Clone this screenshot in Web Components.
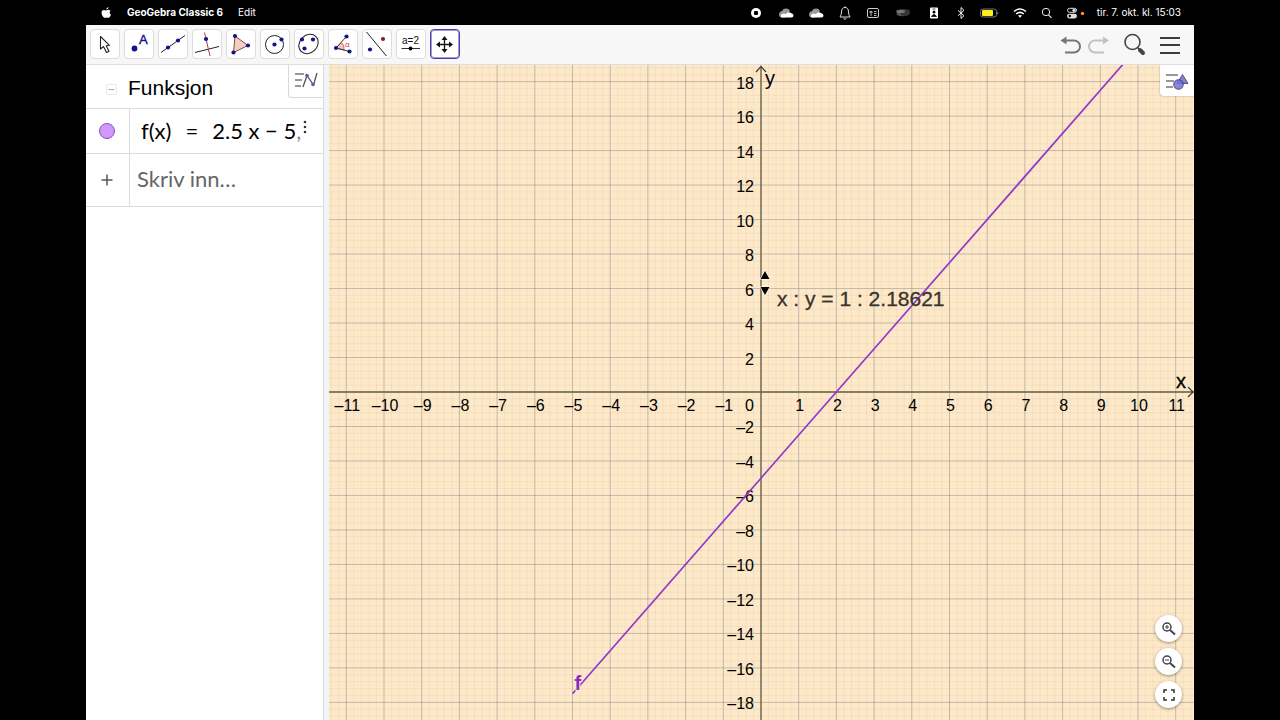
<!DOCTYPE html>
<html lang="no">
<head>
<meta charset="utf-8">
<title>GeoGebra Classic 6</title>
<style>
  html, body {
    margin: 0;
    height: 100%;
    background: #000;
  }

  body {
    font-family: "Liberation Sans", Arial, sans-serif;
    color: #000;
    overflow: hidden;
  }

  .cut { color: #888; }
</style>
</head>
<body>

<geo-app>
  <system-bar slot="system"></system-bar>
  <geo-toolbar slot="toolbar">
    <tool-button icon="move" label="Flytt"></tool-button>
    <tool-button icon="point" label="Punkt"></tool-button>
    <tool-button icon="line" label="Linje"></tool-button>
    <tool-button icon="perpendicular" label="Normal"></tool-button>
    <tool-button icon="polygon" label="Mangekant"></tool-button>
    <tool-button icon="circle" label="Sirkel"></tool-button>
    <tool-button icon="ellipse" label="Ellipse"></tool-button>
    <tool-button icon="angle" label="Vinkel"></tool-button>
    <tool-button icon="reflect" label="Speiling"></tool-button>
    <tool-button icon="slider" label="Glider"></tool-button>
    <tool-button icon="pan" label="Flytt grafikkfeltet" selected></tool-button>
  </geo-toolbar>
  <algebra-view slot="algebra" heading="Funksjon">
    <algebra-row>
      <button slot="marker" class="dot" aria-label="Vis eller skjul f"></button>
      <span>f(x)</span>
      <span>=</span>
      <span>2.5 x &minus; 5<span class="cut">,</span></span>
    </algebra-row>
    <algebra-row input placeholder="Skriv inn…"></algebra-row>
  </algebra-view>
  <graph-view slot="graph" slope="2.5" intercept="-5" from="-5"></graph-view>
</geo-app>

<script>
  const NAVY = '#14148a';

  // Toolbar icons, drawn on a 30x30 grid
  const TOOL_ICONS = {
    move: `<path d="M10.5 7.5 L10.5 20 L13.5 17.5 L16.5 23.5 L19 22.3 L16.2 16.8 L19.5 16.3 Z" fill="#fff" stroke="#222" stroke-width="1.1" stroke-linejoin="round"/>`,
    point: `<circle cx="10.5" cy="19.5" r="2.9" fill="${NAVY}"/>
      <text x="15" y="15" font-size="13" fill="${NAVY}" stroke="${NAVY}" stroke-width=".4">A</text>`,
    line: `<path d="M3 23.5 L27 6.5" stroke="#222" stroke-width="1"/>
      <circle cx="10" cy="18.5" r="2.1" fill="${NAVY}"/><circle cx="20" cy="11.5" r="2.1" fill="${NAVY}"/>`,
    perpendicular: `<path d="M3 23.5 L27 17.5" stroke="#222" stroke-width="1"/>
      <path d="M12.5 3.5 L18 27" stroke="#b03a44" stroke-width="1"/>
      <circle cx="14" cy="10" r="2.1" fill="${NAVY}"/>`,
    polygon: `<path d="M9 7 L22 16.5 L7.5 23.5 Z" fill="#f0cfc4" stroke="#8a4a3a" stroke-width="1"/>
      <circle cx="9" cy="7" r="2.1" fill="${NAVY}"/><circle cx="22" cy="16.5" r="2.1" fill="${NAVY}"/><circle cx="7.5" cy="23.5" r="2.1" fill="${NAVY}"/>`,
    circle: `<circle cx="14.5" cy="15.5" r="9" fill="none" stroke="#222"/>
      <circle cx="14.5" cy="15.5" r="2.1" fill="${NAVY}"/><circle cx="21.5" cy="10.5" r="2.1" fill="${NAVY}"/>`,
    ellipse: `<ellipse cx="14.5" cy="15" rx="10.5" ry="8.8" transform="rotate(-45 14.5 15)" fill="none" stroke="#222"/>
      <circle cx="8" cy="10.5" r="2.1" fill="${NAVY}"/><circle cx="19" cy="10.5" r="2.1" fill="${NAVY}"/><circle cx="10.5" cy="19.5" r="2.1" fill="${NAVY}"/>`,
    angle: `<path d="M8 19 L13.5 13.5 A8 8 0 0 1 16 21 Z" fill="#f7c4c4" stroke="#d05a60" stroke-width=".9"/>
      <path d="M18.5 7.5 L8 19 L21.5 22.5" fill="none" stroke="#333"/>
      <text x="17" y="18" font-size="8" fill="#c33a40">α</text>
      <circle cx="18.5" cy="7.5" r="2.1" fill="${NAVY}"/><circle cx="8" cy="19" r="2.1" fill="${NAVY}"/><circle cx="21.5" cy="22.5" r="2.1" fill="${NAVY}"/>`,
    reflect: `<path d="M4.5 3 L24.5 27" stroke="#222" stroke-width="1"/>
      <circle cx="8" cy="20.5" r="2.1" fill="${NAVY}"/><circle cx="21" cy="10" r="2.1" fill="#8c1a22"/>`,
    slider: `<text x="14.5" y="15" font-size="10" text-anchor="middle" fill="#111">a=2</text>
      <path d="M5.5 19.5 H24" stroke="#333" stroke-width="1"/><circle cx="14.5" cy="19.5" r="1.9" fill="#000"/>`,
    pan: `<path d="M14.5 9.5 V21.5 M8.5 15.5 H20.5" stroke="#111" stroke-width="1.3"/>
      <path d="M14.5 7 l3 4 h-6z M14.5 24 l3 -4 h-6z M6 15.5 l4 -3 v6z M23 15.5 l-4 -3 v6z" fill="#111"/>`
  };

  const CLOUD = `<path d="M2 10 a4 4 0 0 1 3 -4 a4.5 4.5 0 0 1 8 0 L8 12.5 H4 A3 3 0 0 1 2 10z" fill="#999"/><path d="M4.5 12.5 a2.5 2.5 0 0 1 .5 -3.5 q2 -1 4 0 q2 -3 5 -1 q2.5 .5 2.5 2.5 q0 2 -2 2z" fill="#fff"/>`;

  // Menu bar icons: [width, markup], each 16 high
  const STATUS_ICONS = [
    [18, `<circle cx="9" cy="8" r="5" fill="#fff"/><rect x="7" y="6" width="4" height="4" rx="1" fill="#000"/>`],
    [18, CLOUD],
    [18, CLOUD],
    [16, `<path d="M3 12 Q4.5 10 4.5 7 Q4.5 2.5 8 2.5 Q11.5 2.5 11.5 7 Q11.5 10 13 12z M6.5 13.5 q1.5 1.5 3 0 M8 1.3 V2.5" fill="none" stroke="#ddd"/>`],
    [16, `<rect x="2.5" y="3.5" width="11" height="9" rx="1.5" fill="none" stroke="#ccc"/><path d="M5 6.5 h2 v1.5 h-2z M5 10 h2 M9 6.5 h2.5 M9 8.5 h2.5 M9 10.5 h2.5" fill="none" stroke="#ccc" stroke-width=".9"/>`],
    [20, `<path d="M3 5.5 Q10 3 16.5 5.5 V9 Q10 13 4 10z" fill="#555"/><ellipse cx="12" cy="8" rx="4.5" ry="3" fill="#333"/><ellipse cx="8" cy="6.5" rx="4" ry="1.5" fill="#777"/>`],
    [18, `<rect x="5" y="2.5" width="8" height="11" rx="1" fill="#fff"/><circle cx="9" cy="7" r="1.5"/><path d="M6.5 11.5 q2.5 -4 5 0z M7.5 4 h3" stroke="#000" stroke-width=".7"/>`],
    [12, `<path d="M3 5.3 L9 10.7 L6 13.5 V2.5 L9 5.3 L3 10.7" fill="none" stroke="#eee"/>`],
    [20, `<rect x="1.5" y="4" width="16" height="8" rx="2.5" fill="none" stroke="#777"/><rect x="3" y="5" width="11" height="6" rx="1" fill="#ffee1e"/><path d="M18.8 6.8 v2.5" stroke="#777"/>`],
    [18, `<path d="M3 6.5 Q9 1.5 15 6.5 M5.2 9 Q9 5.8 12.8 9" fill="none" stroke="#fff" stroke-width="1.5"/><path d="M7 10.6 Q9 9.2 11 10.6 L9 12.8z" fill="#fff"/>`],
    [12, `<circle cx="5" cy="7" r="3.7" fill="none" stroke="#eee"/><path d="M7.5 9.8 L10.5 12.8" stroke="#eee" stroke-width="1.2"/>`],
    [20, `<rect x="2.5" y="3.3" width="9" height="4" rx="2" fill="none" stroke="#ddd"/><rect x="2" y="8.7" width="10" height="4.8" rx="2.4" fill="#ddd"/><circle cx="9" cy="5.3" r="1.6" fill="#ddd"/><circle cx="4.8" cy="11" r="1.2"/><circle cx="17.5" cy="8.5" r="1.7" fill="#ff8c2a"/>`]
  ];

  const svg = (w, h, body) =>
    `<svg width="${w}" height="${h}" viewBox="0 0 ${w} ${h}" fill="#000" aria-hidden="true">${body}</svg>`;

  class BaseElement extends HTMLElement {
    constructor() {
      super();
      this.attachShadow({ mode: 'open' });
    }

    connectedCallback() {
      this.render();
    }
  }

  /* Window frame: system bar, toolbar, and the two views side by side */
  class GeoApp extends BaseElement {
    render() {
      this.shadowRoot.innerHTML = `
        <style>
          :host {
            display: grid;
            grid-template-rows: auto auto minmax(0, 1fr);
            height: 100vh;
            box-sizing: border-box;
            padding: 0 86px;
          }

          main {
            display: grid;
            grid-template-columns: 237px 6px minmax(0, 1fr);
            min-height: 0;
            background: #fff;
          }

          .splitter {
            background: #f3f4f7;
            box-shadow: inset 1px 0 #dcdce0;
          }
        </style>
        <slot name="system"></slot>
        <slot name="toolbar"></slot>
        <main>
          <slot name="algebra"></slot>
          <div class="splitter"></div>
          <slot name="graph"></slot>
        </main>
      `;
    }
  }

  class SystemBar extends BaseElement {
    render() {
      this.shadowRoot.innerHTML = `
        <style>
          :host {
            display: flex;
            align-items: center;
            justify-content: space-between;
            height: 25px;
            padding: 0 13px 0 14px;
            background: #000;
            color: #fff;
            font: 10px/25px Inter, "Liberation Sans", sans-serif;
          }

          nav, .status {
            display: flex;
            align-items: center;
          }

          button {
            padding: 0;
            border: 0;
            background: none;
            color: inherit;
            font: inherit;
          }

          nav { gap: 15px; }
          .app { font-weight: 700; }
          .status { gap: 12px; }
          svg { display: block; }
        </style>
        <nav>
          ${svg(12, 16, `<path d="M8.5 2 Q8.5 4.2 6.2 4.5 Q6.2 2.5 8.5 2z M6.2 5.5 Q8.5 4 10.5 5.8 Q8.5 7.5 11 9.8 Q9.8 13 8.3 13 Q6.5 12.2 5 13 Q3.3 13 2 10 Q.5 5.5 3.8 4.9 Q5 4.9 6.2 5.5z" fill="#fff"/>`)}
          <button class="app">GeoGebra Classic 6</button>
          <button>Edit</button>
        </nav>
        <div class="status">
          ${STATUS_ICONS.map(([w, body]) => svg(w, 16, body)).join('')}
          <time>tir. 7. okt. kl. 15:03</time>
        </div>
      `;
    }
  }

  class GeoToolbar extends BaseElement {
    render() {
      this.shadowRoot.innerHTML = `
        <style>
          :host {
            display: flex;
            align-items: center;
            justify-content: space-between;
            height: 38px;
            padding: 0 12px 1px 4px;
            background: #f7f7f8;
            border-bottom: 1px solid #dedede;
          }

          .tools { display: flex; gap: 4px; }
          .actions { display: flex; align-items: center; }

          button {
            display: flex;
            padding: 0;
            border: 0;
            background: none;
          }

          .search { margin: 0 11px; }
        </style>
        <div class="tools"><slot></slot></div>
        <div class="actions">
          <button aria-label="Angre">${svg(28, 28, `<path d="M9 10.5 H18 a5.8 5.8 0 0 1 0 12 H9" fill="none" stroke="#777" stroke-width="2"/><path d="M4.5 10.5 L10.5 6.5 V14.5z" fill="#777"/>`)}</button>
          <button aria-label="Gjør om">${svg(28, 28, `<path d="M20 10.5 H11 a5.8 5.8 0 0 0 0 12 H20" fill="none" stroke="#c2c2c2" stroke-width="2"/><path d="M25 10.5 L19 6.5 V14.5z" fill="#c2c2c2"/>`)}</button>
          <button class="search" aria-label="Søk">${svg(24, 28, `<circle cx="9.5" cy="12" r="7.5" fill="none" stroke="#444" stroke-width="1.6"/><path d="M14.5 17.5 L17 20" stroke="#444" stroke-width="1.6"/><path d="M17 20 L20 23" stroke="#444" stroke-width="4" stroke-linecap="round"/>`)}</button>
          <button aria-label="Meny">${svg(24, 28, `<path d="M2 8 H22 M2 15 H22 M2 23 H22" stroke="#3c3c3c" stroke-width="2"/>`)}</button>
        </div>
      `;
    }
  }

  class ToolButton extends BaseElement {
    render() {
      const icon = TOOL_ICONS[this.getAttribute('icon')] || '';
      this.shadowRoot.innerHTML = `
        <style>
          :host { display: block; }

          button {
            display: block;
            width: 30px;
            height: 30px;
            padding: 0;
            border: 1px solid #dcdcdc;
            border-radius: 4px;
            background: #fff;
          }

          svg { display: block; margin: -1px; }
          :host([selected]) button { box-shadow: inset 0 0 0 1px #a49bd4; border-color: #4a3da5; }
        </style>
        <button aria-label="${this.getAttribute('label')}" aria-pressed="${this.hasAttribute('selected')}">
          ${svg(30, 30, icon)}
        </button>
      `;
    }
  }

  class AlgebraView extends BaseElement {
    render() {
      this.shadowRoot.innerHTML = `
        <style>
          :host { display: block; background: #fff; min-width: 0; }

          header {
            display: flex;
            align-items: center;
            gap: 11px;
            height: 43px;
            padding-left: 20px;
            border-bottom: 1px solid #dcdcdc;
          }

          h2 {
            flex: 1;
            margin: 0;
            padding-top: 2px;
            font-size: 21px;
            line-height: 24px;
            font-weight: 400;
          }

          button { padding: 0; background: #fff; }

          .collapse {
            width: 11px;
            height: 11px;
            margin-top: 6px;
            border: 1px solid #e8e8e8;
            border-radius: 2px;
          }

          .collapse svg { display: block; }

          .style {
            align-self: flex-start;
            width: 35px;
            height: 33px;
            border: 1px solid #d8d8d8;
            border-width: 0 0 1px 1px;
            border-bottom-left-radius: 4px;
          }
        </style>
        <header>
          <button class="collapse" aria-label="Skjul">${svg(9, 9, `<path d="M1.5 4.5 H7.5" stroke="#aaa"/>`)}</button>
          <h2>${this.getAttribute('heading')}</h2>
          <button class="style" aria-label="Stil">
            ${svg(26, 22, `<path d="M2 5 H11 M2 11 H9 M2 17 H8" stroke="#777" stroke-width="1.3"/><path d="M10 18 L14 6.5 L20.5 16 L24 4" fill="none" stroke="#555" stroke-width="1.3"/><circle cx="14" cy="6.5" r="1.8" fill="#5b55c8"/><circle cx="20" cy="15.5" r="1.8" fill="#5b55c8"/>`)}
          </button>
        </header>
        <slot></slot>
      `;
    }
  }

  class AlgebraRow extends BaseElement {
    render() {
      const isInput = this.hasAttribute('input');
      this.shadowRoot.innerHTML = `
        <style>
          :host {
            display: grid;
            grid-template-columns: 44px minmax(0, 1fr);
            height: 44px;
            border-bottom: 1px solid #dcdcdc;
            font: 22px/28px Lato, "Liberation Sans", sans-serif;
          }

          :host([input]) { height: 52px; }

          .marker {
            display: flex;
            align-items: center;
            justify-content: center;
            padding-right: 1px;
            border-right: 1px solid #dcdcdc;
          }

          .body {
            position: relative;
            display: flex;
            align-items: center;
            gap: 14px;
            padding-left: 11px;
            white-space: nowrap;
          }

          :host([input]) .body { padding: 0 7px 3px; }

          button { padding: 0; border: 0; background: none; }

          /* stays over the formula when that is too long for the row */
          .more {
            position: absolute;
            top: 11px;
            right: 14px;
          }

          svg { display: block; }

          input {
            width: 100%;
            padding: 0;
            border: 0;
            outline: 0;
            font: inherit;
            background: none;
          }

          input::placeholder { color: #666; opacity: 1; }

          ::slotted(.dot) {
            width: 16px;
            height: 16px;
            padding: 0;
            border: 1px solid #8b52b8;
            border-radius: 50%;
            background: #d098ff;
          }
        </style>
        <div class="marker">
          <slot name="marker"><button aria-label="Legg til">${svg(14, 14, `<path d="M1.5 7 H12.5 M7 1.5 V12.5" stroke="#555" stroke-width="1.5"/>`)}</button></slot>
        </div>
        <div class="body">
          ${isInput
            ? `<input type="text" aria-label="Skriv inn" placeholder="${this.getAttribute('placeholder')}">`
            : `<slot></slot><button class="more" aria-label="Mer">${svg(8, 14, `<circle cx="4" cy="2" r="1.3" fill="#333"/><circle cx="4" cy="7" r="1.3" fill="#333"/><circle cx="4" cy="12" r="1.3" fill="#333"/>`)}</button>`}
        </div>
      `;
    }
  }

  /* Graphics view: origin in the centre, redrawn whenever the box changes */
  class GraphView extends BaseElement {
    connectedCallback() {
      this.unitX = 37.7;
      this.ratio = 2.18621;
      this.unitY = this.unitX / this.ratio;
      this.render();
      this.draw();
      new ResizeObserver(() => this.draw()).observe(this);
    }

    render() {
      this.shadowRoot.innerHTML = `
        <style>
          :host {
            display: block;
            position: relative;
            min-width: 0;
            overflow: hidden;
            background: #fde8c8;
          }

          #plot { display: block; position: absolute; inset: 0; }

          #plot text { font-family: "Liberation Sans", Arial, sans-serif; }
          .tick { font-size: 16px; }
          .axis-name { font-size: 20px; }

          button {
            display: flex;
            align-items: center;
            justify-content: center;
            padding: 0;
            border: 0;
            background: #fff;
          }

          .style {
            position: absolute;
            top: 0;
            right: 0;
            width: 34px;
            height: 31px;
            border-bottom-left-radius: 4px;
            box-shadow: 0 0 2px rgba(0, 0, 0, .35);
          }

          .zoom {
            position: absolute;
            right: 12px;
            bottom: 12px;
            display: grid;
            gap: 6px;
          }

          .zoom button {
            width: 27px;
            height: 27px;
            border-radius: 50%;
            box-shadow: 0 1px 3px rgba(0, 0, 0, .4);
          }
        </style>
        <svg id="plot" width="100%" height="100%"></svg>
        <button class="style" aria-label="Stil">
          ${svg(26, 22, `<path d="M2 5 H14 M2 11 H10 M2 17 H9" stroke="#777" stroke-width="1.3"/><path d="M18.5 4.5 L24 13.5 H13z" fill="#8080e8" stroke="#444" stroke-width=".8"/><circle cx="14.5" cy="14.5" r="4.8" fill="#7070e0" fill-opacity=".85" stroke="#333" stroke-width=".8"/>`)}
        </button>
        <div class="zoom">
          <button aria-label="Zoom inn">${svg(16, 16, `<circle cx="6" cy="6" r="4" fill="none" stroke="#444" stroke-width="1.5"/><path d="M9 9 L14 13.5" stroke="#444" stroke-width="2"/><path d="M4 6 h4 M6 4 v4" stroke="#444"/>`)}</button>
          <button aria-label="Zoom ut">${svg(16, 16, `<circle cx="6" cy="6" r="4" fill="none" stroke="#444" stroke-width="1.5"/><path d="M9 9 L14 13.5" stroke="#444" stroke-width="2"/><path d="M4 6 h4" stroke="#444"/>`)}</button>
          <button aria-label="Fullskjerm">${svg(16, 16, `<path d="M3 6 V3 H6 M10 3 H13 V6 M13 10 V13 H10 M6 13 H3 V10" fill="none" stroke="#333" stroke-width="1.5"/>`)}</button>
        </div>
      `;
    }

    draw() {
      const w = this.clientWidth;
      const h = this.clientHeight;
      const ox = Math.round(w / 2) - 1;
      const oy = Math.round(h / 2) - 1;
      const px = x => ox + x * this.unitX;
      const py = y => oy - y * this.unitY;
      const label = n => (n < 0 ? '–' + -n : String(n));

      let minor = '', major = '', ticks = '';

      // vertical lines, five steps per unit
      const nx = Math.floor(w / 2 / this.unitX * 5);
      for (let i = -nx; i <= nx; i++) {
        const seg = `M${px(i / 5)} 0V${h}`;
        if (i % 5) { minor += seg; continue; }
        major += seg;
        if (i) ticks += `<text class="tick" x="${px(i / 5) + 1}" y="${oy + 19}" text-anchor="middle">${label(i / 5)}</text>`;
      }

      // horizontal lines, five steps per two units
      const ny = Math.floor(h / 2 / this.unitY * 2.5);
      for (let i = -ny; i <= ny; i++) {
        const y = i / 2.5;
        const seg = `M0 ${py(y)}H${w}`;
        if (i % 5) { minor += seg; continue; }
        major += seg;
        if (i) ticks += `<text class="tick" x="${ox - 7}" y="${py(y) + 7}" text-anchor="end">${label(y)}</text>`;
      }
      ticks += `<text class="tick" x="${ox - 7}" y="${oy + 19}" text-anchor="end">0</text>`;

      const a = Number(this.getAttribute('slope'));
      const b = Number(this.getAttribute('intercept'));
      const x0 = Number(this.getAttribute('from'));
      const x1 = w / 2 / this.unitX;
      const y0 = a * x0 + b;

      this.shadowRoot.getElementById('plot').innerHTML = `
        <path d="${minor}" stroke="#8a7a60" stroke-opacity=".08"/>
        <path d="${major}" stroke="#6c6c78" stroke-opacity=".38"/>
        <path d="M${ox} 2V${h} M0 ${oy}H${w}" stroke="#6a624a" stroke-width="1.3"/>
        <path d="M${ox - 5} 7L${ox} 1.5L${ox + 5} 7 M${w - 6} ${oy - 5}L${w - 1} ${oy}L${w - 6} ${oy + 5}" fill="none" stroke="#403a2c" stroke-width="1.2"/>
        ${ticks}
        <text class="axis-name" x="${ox + 4}" y="20">y</text>
        <text class="axis-name" x="${w - 18}" y="${oy - 4}" stroke="#000" stroke-width=".3">x</text>
        <path d="M${px(x0)} ${py(y0)}L${px(x1)} ${py(a * x1 + b)}" stroke="#9038cc" stroke-width="1.7"/>
        <text x="${px(x0) + 2}" y="${py(y0) - 4}" font-size="20" font-weight="700" fill="#8a2bc4" stroke="#fde8c8" stroke-width="2" paint-order="stroke">f</text>
        <text x="${ox + 16}" y="${oy - 86}" font-size="21" fill="#38332a" stroke="#38332a" stroke-width=".3">x : y = 1 : ${this.ratio}</text>
        <path d="M${ox + 4} ${oy - 121}l4.5 8h-9z M${ox + 4} ${oy - 97}l4.5 -8h-9z" fill="#000" stroke="#fff" stroke-width="1.2" paint-order="stroke"/>
      `;
    }
  }

  customElements.define('geo-app', GeoApp);
  customElements.define('system-bar', SystemBar);
  customElements.define('geo-toolbar', GeoToolbar);
  customElements.define('tool-button', ToolButton);
  customElements.define('algebra-view', AlgebraView);
  customElements.define('algebra-row', AlgebraRow);
  customElements.define('graph-view', GraphView);
</script>
</body>
</html>
